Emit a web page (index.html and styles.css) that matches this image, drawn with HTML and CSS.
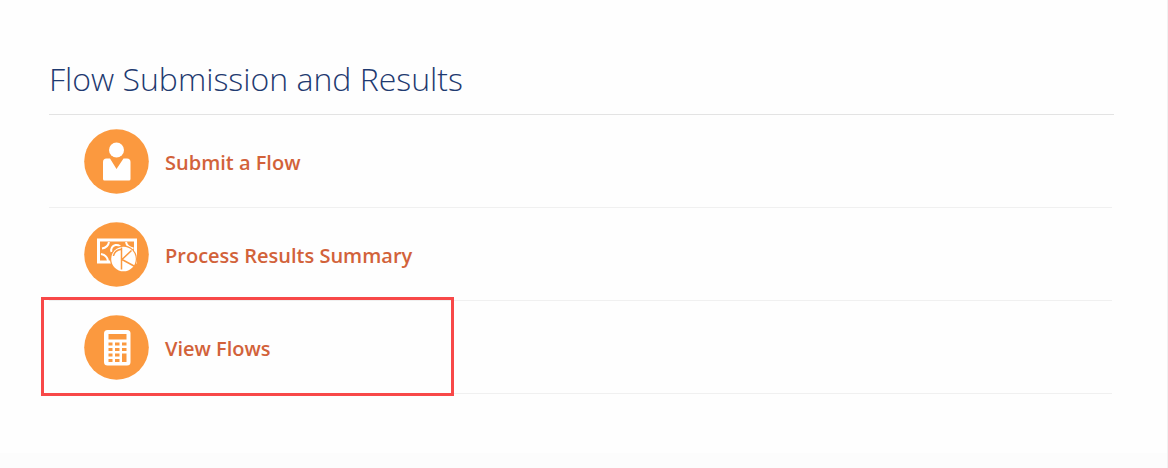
FILE: index.html
```html
<!DOCTYPE html>
<html lang="en">
<head>
<meta charset="utf-8">
<title>Flow Submission and Results</title>
<link rel="stylesheet" href="styles.css">
</head>
<body>
<main class="panel">
  <h1 class="title">Flow Submission and Results</h1>
  <ul class="flows">
    <li class="flow">
      <a class="flow-link" href="#submit">
        <svg class="icon" viewBox="0 0 65 65" aria-hidden="true">
          <circle class="disc" cx="32.5" cy="32.5" r="32.3"/>
          <circle class="glyph" cx="32.5" cy="21" r="7.5"/>
          <path class="glyph" d="M19 33q0-3.5 3.5-3.5h3.500l6.500 10.500 7-10.500h3.500q3.500 0 3.500 3.500v17q0 1.500-1.500 1.500h-24.500q-1.500 0-1.500-1.500z"/>
        </svg>
        <span class="label">Submit a Flow</span>
      </a>
    </li>
    <li class="flow">
      <a class="flow-link" href="#summary">
        <svg class="icon" viewBox="0 0 65 65" aria-hidden="true">
          <circle class="disc" cx="32.5" cy="32.5" r="32.3"/>
          <rect class="bill" x="14.500" y="18" width="37" height="22"/>
          <path class="ring" d="M25 20q-1 5.500-7 6.500M17 32q6 1 7 7M42 20q1 5.500 7.500 6.500"/>
          <path class="ring" d="M27.500 30a5.300 5.300 0 1 1 10.300-2"/>
          <circle class="disc" cx="39.500" cy="37" r="13.500"/>
          <circle class="glyph" cx="39.500" cy="37" r="12.300"/>
          <path class="cut" d="M37.500 25.500v22M38 37.500l9.500-9M38 37.500l12 6.500M29.500 34q1-6 8-6.800"/>
        </svg>
        <span class="label">Process Results Summary</span>
      </a>
    </li>
    <li class="flow marked">
      <a class="flow-link" href="#view">
        <svg class="icon" viewBox="0 0 65 65" aria-hidden="true">
          <circle class="disc" cx="32.5" cy="32.5" r="32.3"/>
          <rect class="glyph" x="20" y="15" width="26.500" height="35.500" rx="3.500"/>
          <path class="disc" d="M24.500 19h18v5.500h-18zM24.500 27.500h4v3h-4zM31 27.500h4.500v3h-4.500zM38 27.500h4.500v3h-4.500zM24.500 33h4v3h-4zM31 33h4.500v3h-4.500zM38 33h4.500v3h-4.500zM24.500 38.500h4v3h-4zM31 38.500h4.500v3h-4.500zM24.500 44h4v3h-4zM31 44h4.500v3h-4.500zM38 38.500h4.500v8.500h-4.500z"/>
        </svg>
        <span class="label">View Flows</span>
      </a>
    </li>
  </ul>
</main>
<footer class="footer"></footer>
</body>
</html>
```
FILE: styles.css
```css
*,
*::after {
  box-sizing: border-box;
}

body {
  display: flex;
  flex-direction: column;
  min-height: 100vh;
  margin: 0;
  background: #fefefe;
  border-right: 1px solid #f1f1f1;
  font-family: "Open Sans", "Noto Sans", sans-serif;
}

.panel {
  flex: 1;
  padding: 54px 53px 0 49px;
}

.title {
  margin: 0;
  padding-bottom: 10px;
  border-bottom: 1px solid #e3e3e3;
  color: #1f3a70;
  font-size: 32px;
  font-weight: 300;
  line-height: 50px;
}

.flows {
  margin: 0;
  padding: 0;
  list-style: none;
}

.flow {
  position: relative;
  margin-right: 2px;
  border-bottom: 1px solid #f0f0f0;
}

.flow-link {
  display: flex;
  align-items: center;
  gap: 16px;
  padding: 14px 35px 13px;
  color: #d2623a;
  text-decoration: none;
}

.marked::after {
  content: "";
  position: absolute;
  top: -4px;
  bottom: -3px;
  left: -8px;
  width: 413px;
  border: 3px solid #f84848;
  pointer-events: none;
}

.icon {
  flex: none;
  width: 65px;
  height: 65px;
}

.label {
  padding-top: 2px;
  font-size: 20px;
  font-weight: 600;
  line-height: 30px;
}

.disc {
  fill: #fb993f;
}

.glyph {
  fill: #fff;
}

.bill {
  fill: none;
  stroke: #fff;
  stroke-width: 3;
}

.ring {
  fill: none;
  stroke: #fff;
  stroke-width: 2;
}

.cut {
  fill: none;
  stroke: #fb993f;
  stroke-width: 1.5;
}

.footer {
  height: 15px;
  background: #fcfcfc;
}
```
